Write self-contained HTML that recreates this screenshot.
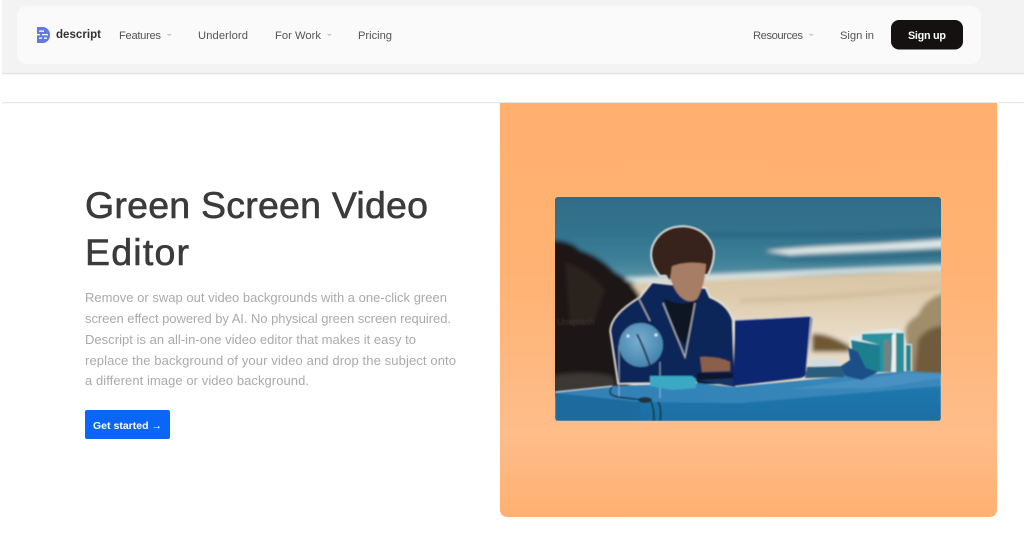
<!DOCTYPE html>
<html lang="en"><head><meta charset="utf-8"><title>Green Screen Video Editor</title>
<style>
html,body{margin:0;padding:0;background:#fff;width:1024px;height:538px;overflow:hidden}
svg{display:block;position:absolute;left:0;top:0}
text{font-family:"Liberation Sans",sans-serif}
</style></head><body>
<svg width="1024" height="538" viewBox="0 0 1024 538" xmlns="http://www.w3.org/2000/svg">
<defs>
<linearGradient id="org" x1="0" y1="0" x2="0" y2="1"><stop offset="0" stop-color="#ffb06f"/><stop offset=".4" stop-color="#ffb273"/><stop offset=".8" stop-color="#febd8a"/><stop offset="1" stop-color="#ffb072"/></linearGradient>
<linearGradient id="sea" x1="0" y1="0" x2="0" y2="1"><stop offset="0" stop-color="#2f6c86"/><stop offset=".5" stop-color="#32738e"/><stop offset=".8" stop-color="#3f8199"/><stop offset="1" stop-color="#5f97a8"/></linearGradient>
<linearGradient id="sand" x1="0" y1="0" x2="0" y2="1"><stop offset="0" stop-color="#d8c4a2"/><stop offset=".25" stop-color="#dfcdb0"/><stop offset=".5" stop-color="#e8dcc8"/><stop offset="1" stop-color="#e4d6bf"/></linearGradient>
<linearGradient id="top" x1="0" y1="0" x2="1" y2="0"><stop offset="0" stop-color="#2f80b6"/><stop offset="1" stop-color="#3a88bb"/></linearGradient>
<linearGradient id="front" x1="0" y1="0" x2="0" y2="1"><stop offset="0" stop-color="#2078ae"/><stop offset="1" stop-color="#196ea3"/></linearGradient>
<radialGradient id="glb" cx=".45" cy=".4" r=".7"><stop offset="0" stop-color="#78aecf"/><stop offset="1" stop-color="#3c7da8"/></radialGradient>
<filter id="b" x="-5%" y="-5%" width="110%" height="110%"><feGaussianBlur stdDeviation=".7"/></filter>
<filter id="b2" x="-10%" y="-20%" width="120%" height="140%"><feGaussianBlur stdDeviation="2"/></filter>
<filter id="t" x="-5%" y="-20%" width="110%" height="140%"><feGaussianBlur stdDeviation=".3"/></filter>
<clipPath id="ph"><rect x="555" y="197" width="386" height="224" rx="3"/></clipPath>
</defs>

<!-- header -->
<rect x="2" y="0" width="1022" height="73" fill="#f3f3f3"/>
<rect x="2" y="73" width="1022" height="1.2" fill="#e0e0e0"/>
<rect x="17" y="6" width="964" height="58" rx="10" fill="#fafafa"/>
<rect x="2" y="102" width="1022" height="1.2" fill="#e6e6e6"/>

<!-- logo -->
<g filter="url(#t)">
<path d="M37 27H44Q50 29 50 35Q50 41 44 43H37Z" fill="#6478e4"/>
<rect x="39" y="30.500" width="5" height="1.300" fill="#fff"/>
<rect x="37" y="34" width="3" height="1.300" fill="#fff"/><rect x="42" y="34" width="6" height="1.300" fill="#fff"/>
<rect x="39" y="37.500" width="3" height="1.300" fill="#fff"/><rect x="44" y="37.500" width="3" height="1.300" fill="#fff"/>
</g>

<g filter="url(#t)">
<text x="56" y="38" font-size="11.500" font-weight="700" fill="#333" textLength="45">descript</text>
<g font-size="11.200" fill="#555">
<text x="119" y="39" textLength="42">Features</text>
<text x="198" y="39" textLength="50">Underlord</text>
<text x="275" y="39" textLength="46">For Work</text>
<text x="358" y="39" textLength="34">Pricing</text>
<text x="753" y="39" textLength="50">Resources</text>
<text x="840" y="39" textLength="34">Sign in</text>
</g>
</g>
<g stroke="#bbb" stroke-width="1" fill="none">
<path d="M167.500 34l1.800 1.400 1.800-1.400"/><path d="M327.500 34l1.800 1.400 1.800-1.400"/><path d="M809.500 34l1.800 1.400 1.800-1.400"/>
</g>
<rect x="891" y="20" width="72" height="29.500" rx="8" fill="#141110"/>
<text x="908" y="39" font-size="10.800" font-weight="700" fill="#fff" textLength="38" filter="url(#t)">Sign up</text>

<!-- left content -->
<g filter="url(#t)">
<text x="85" y="218" font-size="37.500" fill="#3a3a3a" stroke="#3a3a3a" stroke-width=".6" textLength="343">Green Screen Video</text>
<text x="85" y="265" font-size="37.500" fill="#3a3a3a" stroke="#3a3a3a" stroke-width=".6" textLength="104">Editor</text>
<g font-size="13" fill="#aaa">
<text x="85" y="302" textLength="362">Remove or swap out video backgrounds with a one-click green</text>
<text x="85" y="323" textLength="366">screen effect powered by AI. No physical green screen required.</text>
<text x="85" y="344" textLength="331">Descript is an all-in-one video editor that makes it easy to</text>
<text x="85" y="365" textLength="371">replace the background of your video and drop the subject onto</text>
<text x="85" y="385" textLength="224">a different image or video background.</text>
</g>
</g>
<rect x="85" y="410" width="85" height="29" rx="2" fill="#0a66f6"/>
<text x="93" y="429" font-size="10.500" font-weight="700" fill="#fff" textLength="69" filter="url(#t)">Get started →</text>

<!-- orange panel -->
<path d="M500 103H997V509Q997 517 989 517H508Q500 517 500 509Z" fill="url(#org)"/>

<!-- photo -->
<g clip-path="url(#ph)">
<rect x="555" y="197" width="386" height="90" fill="#34748f"/>
<g filter="url(#b2)">
<rect x="540" y="190" width="420" height="90" fill="url(#sea)"/>
<path d="M680 232Q800 236 960 228V233Q800 240 680 236Z" fill="#245c76" opacity=".6"/>
<path d="M765 251Q800 247 850 245T960 238V247Q900 250 850 252T790 255Z" fill="#dde7e7"/>
<path d="M770 257Q850 259 960 250V255Q850 263 790 261Z" fill="#285f78" opacity=".7"/>
<path d="M620 278Q700 275 790 271T960 264V270Q850 272 780 277T640 284Z" fill="#d5e3e4"/>
<path d="M620 284Q700 280 780 277T960 269V400H620Z" fill="url(#sand)"/>
<path d="M740 298Q840 296 960 283V287Q840 302 740 303Z" fill="#cdb695" opacity=".6"/>
<!-- grass right -->
<path d="M945 293Q925 298 918 315Q905 322 905 332L908 376H945Z" fill="#a08d6a"/>
<path d="M945 325Q925 328 918 340L914 376H945Z" fill="#705c3c"/>
<path d="M812 334Q826 332 850 346V352H812Z" fill="#705830"/>
<!-- dune -->
<path d="M540 240Q570 238 580 250Q600 256 615 272Q632 280 642 300L630 392L540 396Z" fill="#1f1815"/>
<path d="M565 262Q590 270 605 290L595 320L570 325Z" fill="#2a201b"/>
<path d="M550 376Q585 370 612 376L618 390L550 394Z" fill="#3a3836"/>
</g>
<g filter="url(#b)">
<text x="557" y="325" font-size="9" fill="#4a4644" opacity=".7">Unsplash</text>

<!-- jacket -->
<path d="M618 384L610 331Q611 314 640 297L652 282L706 288L710 297Q728 304 733 320L735 382Z" fill="#11265a" stroke="#eae9e4" stroke-width="1.500"/>
<!-- shirt -->
<path d="M664 298Q680 308 697 300L692 318L685 345L676 335Z" fill="#0e1420"/>
<!-- hair -->
<path d="M660 276Q648 262 652 247Q660 226 684 226Q708 228 714 250Q715 262 708 275L660 276Z" fill="#38221a" stroke="#eae9e4" stroke-width="1.500"/>
<!-- face -->
<path d="M668 268Q685 260 706 264Q705 285 697 299Q690 304 682 298Q672 290 668 268Z" fill="#a87d66"/>
<path d="M662 270L672 266L670 280Z" fill="#38221a"/>
<!-- strings -->
<path d="M638 297L650 321M663 303L685 357L695 303" stroke="#aeb2b4" stroke-width="1.200" fill="none"/>
<!-- arm/hand -->
<path d="M700 357Q718 356 730 362V371L702 372Z" fill="#8c5e4c"/>
<path d="M697 373H735V384H697Z" fill="#10182a"/>

<!-- desk -->
<path d="M555 392L612 386L697 383L733 387L806 380L905 371L941 373V421H555Z" fill="url(#top)"/>
<path d="M555 393L640 402V421H555Z" fill="#1c6a9e"/>
<path d="M640 402L740 403L941 386V421H640Z" fill="url(#front)"/>
<path d="M790 389L905 373L941 374V378L880 388Z" fill="#5a9ecb" opacity=".45"/>
<path d="M555 392L612 386" stroke="#e6e6e2" stroke-width="1"/>

<!-- laptop -->
<path d="M697 380L735 378V387Z" fill="#123064"/>
<path d="M735 320L810 316Q812 316 812 320L806 374Q805 377 800 378L733 386Z" fill="#0a2672"/>
<path d="M735 320L811 316L806 375" fill="none" stroke="#cfdbe8" stroke-width=".8"/>

<!-- globe -->
<path d="M619 345V397M660 362V398" stroke="#a8c8da" stroke-width="1" opacity=".7"/>
<circle cx="641" cy="345" r="22" fill="url(#glb)"/>
<path d="M637 334Q645 350 650 366" stroke="#1c2c3e" stroke-width="1.800" fill="none"/>
<circle cx="628" cy="336" r="1.500" fill="#dcebf3"/><circle cx="656" cy="335" r="1.500" fill="#dcebf3"/>
<path d="M650 376H692L696 379V388L672 390L650 386Z" fill="#3ba9c6"/>
<path d="M612 387Q606 395 618 397Q640 400 650 400Q654 405 654 421M658 402Q662 408 660 421" stroke="#18222c" stroke-width="1.400" fill="none"/>
<ellipse cx="645" cy="400" rx="7" ry="3" fill="#24333f"/>

<!-- desk items -->
<path d="M808 360L838 359L840 366L812 367Z" fill="#cfdde2"/>
<path d="M807 367L842 366L845 377L805 378Z" fill="#2a5d7d"/>
<!-- books -->
<path d="M849 337L861 335V332L895 328L904 332L906 344H912V371L878 372L851 372Z" fill="#dfe8e6"/>
<path d="M851 340L880 345L880 372L854 370Z" fill="#1b7f90"/>
<path d="M862 334L893 333L891 372H880V345L862 340Z" fill="#27939f"/>
<rect x="884" y="340" width="6" height="32" fill="#78807e"/>
<rect x="892" y="335" width="4" height="37" fill="#eeeeea"/>
<rect x="896" y="333" width="8" height="39" fill="#2a8d98"/>
<rect x="906" y="345" width="5" height="26" fill="#1d8791"/>
<path d="M848 347L858 352L866 368L878 372L862 380L845 376L841 366L850 360Z" fill="#1a4f88"/>
</g>
</g>
</svg>
</body></html>
